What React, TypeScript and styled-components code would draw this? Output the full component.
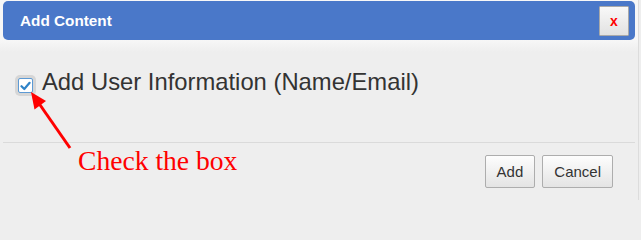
import React from 'react';
import styled, { createGlobalStyle } from 'styled-components';

const GlobalStyle = createGlobalStyle`
  html, body {
    margin: 0;
    padding: 0;
    background: #eeeeee;
  }
  body {
    font-family: "Liberation Sans", Arial, sans-serif;
  }
`;

const Dialog = styled.div`
  position: relative;
  width: 638px;
  height: 200px;
  background: linear-gradient(#f7f7f7 40px, #eeeeee 52px);
  border-right: 1px solid #dcdcdc;
  display: flex;
  flex-direction: column;
  overflow: hidden;
`;

const Header = styled.div`
  margin: 1px 3px 0 3px;
  height: 39px;
  box-sizing: border-box;
  padding: 0 6px 0 17px;
  background: #4a78c9;
  border-radius: 5px;
  display: flex;
  align-items: center;
  justify-content: space-between;
`;

const Title = styled.span`
  color: #ffffff;
  font-weight: bold;
  font-size: 15.3px;
`;

const CloseButton = styled.button`
  width: 30px;
  height: 30px;
  padding: 0;
  border: 1px solid #a9a9a9;
  border-radius: 1px;
  background: linear-gradient(#f8f8f8, #e2e2e2);
  color: #ff0000;
  font-family: "Liberation Sans", Arial, sans-serif;
  font-weight: bold;
  font-size: 14px;
  line-height: 26px;
`;

const Body = styled.div`
  height: 102px;
  padding: 28px 0 0 18px;
  box-sizing: border-box;
`;

const CheckRow = styled.label`
  display: flex;
  align-items: flex-start;
  gap: 9px;
`;

const Box = styled.span`
  margin-top: 10px;
  width: 15px;
  height: 15px;
  box-sizing: border-box;
  border: 1px solid #5d9ad4;
  background: #ffffff;
  border-radius: 2px;
  box-shadow: 0 0 0 3px #d6d6d6;
  display: flex;
  align-items: center;
  justify-content: center;
`;

const LabelText = styled.span`
  font-size: 23.8px;
  line-height: 28px;
  color: #333333;
`;

const Footer = styled.div`
  margin: 0 3px;
  border-top: 1px solid #dadada;
  padding: 12px 22px 0 0;
  display: flex;
  justify-content: flex-end;
  gap: 7px;
`;

const Button = styled.button`
  height: 33px;
  padding: 0 11px;
  border: 1px solid #adadad;
  border-radius: 2px;
  background: linear-gradient(#fdfdfd, #e4e4e4);
  color: #333333;
  font-family: "Liberation Sans", Arial, sans-serif;
  font-size: 15px;
`;

const Annotation = styled.svg`
  position: absolute;
  left: 0;
  top: 0;
  pointer-events: none;
`;

const Note = styled.span`
  position: absolute;
  left: 78px;
  top: 144px;
  color: #ff0000;
  font-family: "Liberation Serif", "Times New Roman", serif;
  font-size: 27.6px;
  line-height: 34px;
`;

export default function App() {
  return (
    <>
      <GlobalStyle />
      <Dialog>
        <Header>
          <Title>Add Content</Title>
          <CloseButton>x</CloseButton>
        </Header>
        <Body>
          <CheckRow>
            <Box>
              <svg width="11" height="10" viewBox="0 0 11 10">
                <path d="M1.5 5.2 L4.3 8 L9.6 1.8" fill="none" stroke="#2f83c8" strokeWidth="2.2" strokeLinecap="round" strokeLinejoin="round" />
              </svg>
            </Box>
            <LabelText>Add User Information (Name/Email)</LabelText>
          </CheckRow>
        </Body>
        <Footer>
          <Button>Add</Button>
          <Button>Cancel</Button>
        </Footer>
        <Annotation width="641" height="200">
          <line x1="70" y1="148" x2="38" y2="102" stroke="#ff0000" strokeWidth="3" />
          <polygon points="31,92 46,101 34.5,109.5" fill="#ff0000" />
        </Annotation>
        <Note>Check the box</Note>
      </Dialog>
    </>
  );
}
